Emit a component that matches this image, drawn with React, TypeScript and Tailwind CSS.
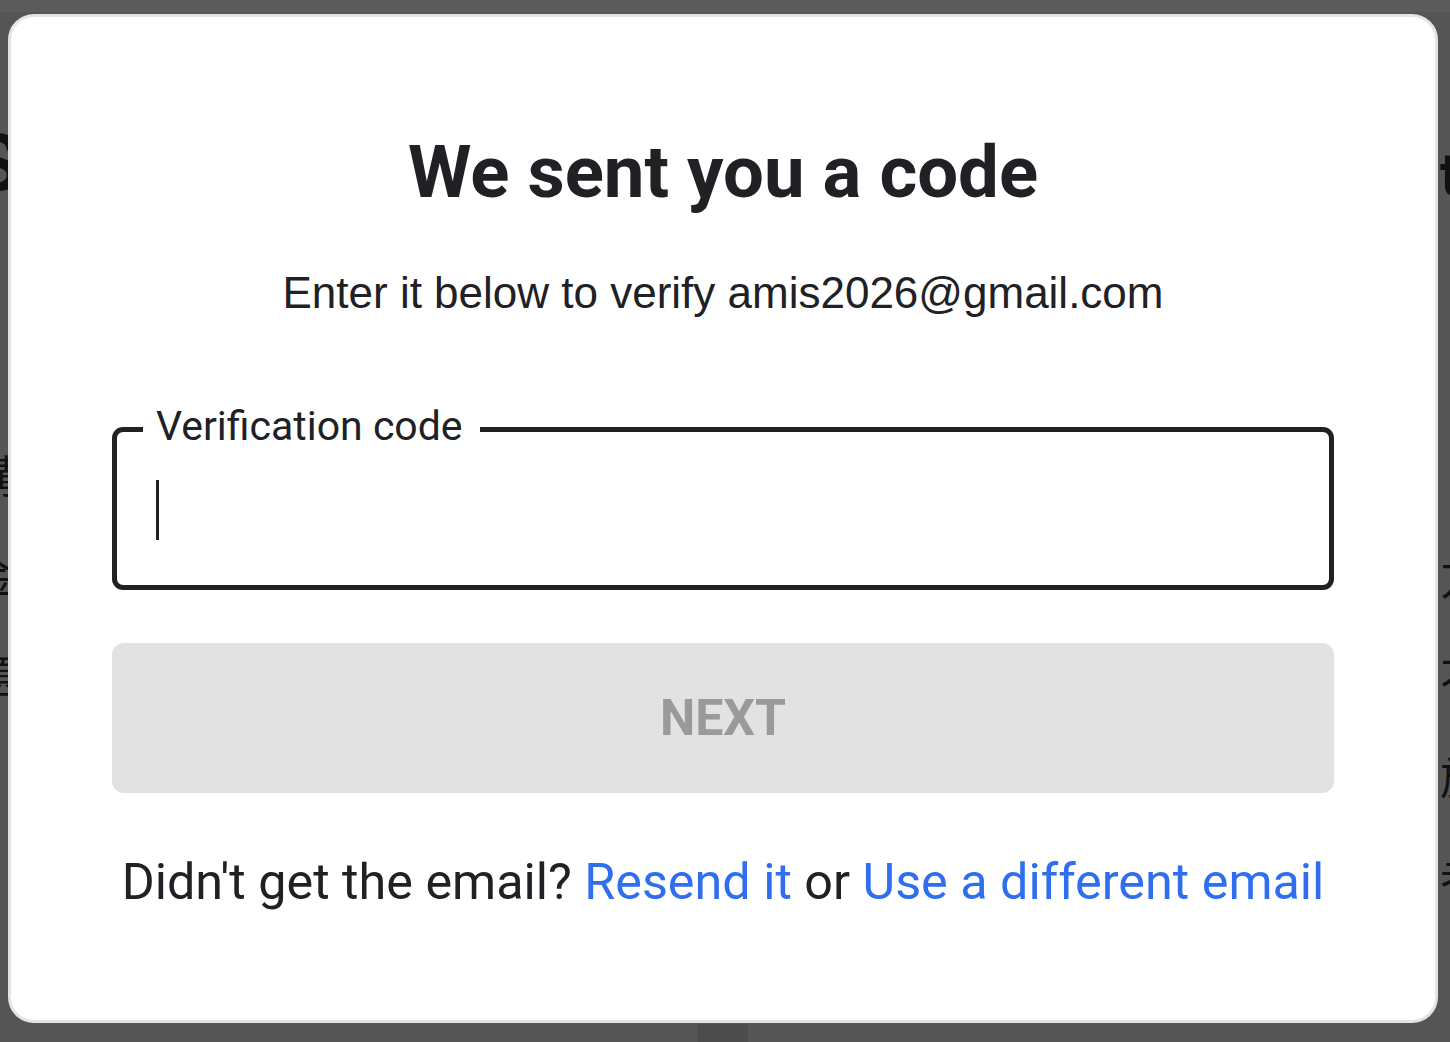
import React from "react";

export default function App() {
  return (
    <div className="relative w-[1450px] h-[1042px] overflow-hidden bg-[#555555]" style={{ fontFamily: "Roboto, 'Noto Sans CJK SC', sans-serif" }}>
      {/* background page fragments */}
      <div className="flex justify-between h-full text-[#111]">
        <div className="flex flex-col w-[40px] -ml-[28px] pt-[118px] font-bold">
          <span className="text-[80px] leading-[90px]">S</span>
          <span className="mt-[220px] text-[44px] leading-[100px] font-normal">講</span>
          <span className="text-[44px] leading-[100px] font-normal">金</span>
          <span className="text-[44px] leading-[100px] font-normal">題</span>
        </div>
        <div className="flex flex-col w-[40px] -mr-[30px] pt-[140px] font-bold">
          <span className="text-[60px] leading-[70px]">t</span>
          <span className="mt-[320px] text-[44px] leading-[100px] font-normal">方</span>
          <span className="text-[44px] leading-[100px] font-normal">不</span>
          <span className="text-[44px] leading-[100px] font-normal">於</span>
          <span className="text-[44px] leading-[100px] font-normal">者</span>
        </div>
      </div>
      <div className="absolute left-0 right-0 top-0 h-[12px] bg-[#5b5b5b]" />
      <div className="absolute left-[698px] w-[50px] bottom-0 h-[18px] bg-[#4c4c4c]" />
      {/* modal */}
      <div className="absolute left-[8px] top-[14px] w-[1430px] h-[1009px] rounded-[26px] border-[3px] border-[#e4e4e4] bg-white flex flex-col items-center">
        <h1 className="mt-[116px] text-[72.5px] leading-[80px] font-bold text-[#202124]">
          We sent you a code
        </h1>
        <p className="mt-[54px] text-[44px] leading-[52px] text-[#202124]" style={{ fontFamily: "'Liberation Sans', Arial, sans-serif" }}>
          Enter it below to verify amis2026@gmail.com
        </p>
        <div className="relative mt-[108px] w-[1222px] h-[163px] rounded-[11px] border-[5px] border-[#202124]">
          <span className="absolute left-[26px] -top-[31px] pl-[13px] pr-[17px] bg-white text-[41px] leading-[50px] text-[#202124]">
            Verification code
          </span>
          <div className="ml-[39px] mt-[48px] w-[3px] h-[60px] bg-[#202124]" />
        </div>
        <button className="mt-[53px] w-[1222px] h-[150px] rounded-[12px] bg-[#e2e2e2] text-[50px] font-bold text-[#9a9a9a]">
          NEXT
        </button>
        <p className="mt-[58px] text-[50.3px] leading-[62px] text-[#202124]">
          Didn't get the email? <span className="text-[#2f6fef]">Resend it</span> or{" "}
          <span className="text-[#2f6fef]">Use a different email</span>
        </p>
      </div>
    </div>
  );
}
